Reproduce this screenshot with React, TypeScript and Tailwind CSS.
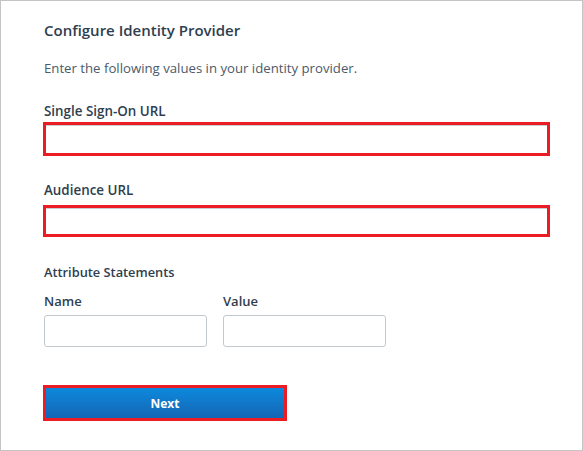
import React from "react";

export default function App() {
  return (
    <div
      className="w-[583px] h-[451px] bg-white border border-[#c4c4c4] pl-[43px] pt-[19px] flex flex-col text-[#2f3e4f]"
      style={{ fontFamily: "'Open Sans', 'Liberation Sans', sans-serif" }}
    >
      <div className="text-[15px] leading-[20px] font-semibold h-[20px]">Configure Identity Provider</div>
      <div className="mt-[19px] text-[13.2px] leading-[18px] text-[#4c5a69]">
        Enter the following values in your identity provider.
      </div>
      <div className="mt-[25px] text-[13.4px] leading-[18px] font-semibold">Single Sign-On URL</div>
      <div className="mt-[2px] w-[507px] h-[34px] border-[3px] border-[#ec1c24] -ml-[1px]">
        <input className="w-full h-full border-t border-[#c8cdd2] outline-none bg-white" />
      </div>
      <div className="mt-[25px] text-[13.4px] leading-[18px] font-semibold">Audience URL</div>
      <div className="mt-[6px] w-[507px] h-[32px] border-[3px] border-[#ec1c24] -ml-[1px]">
        <input className="w-full h-full border-t border-[#c8cdd2] outline-none bg-white" />
      </div>
      <div className="mt-[26px] text-[12.8px] leading-[18px] font-semibold">Attribute Statements</div>
      <div className="mt-[11px] flex gap-[16px]">
        <div className="flex flex-col w-[163px]">
          <div className="text-[13px] leading-[18px] font-semibold">Name</div>
          <input className="mt-[5px] h-[32px] w-[163px] rounded-[3px] border border-[#c3c8cd] outline-none" />
        </div>
        <div className="flex flex-col w-[163px]">
          <div className="text-[13px] leading-[18px] font-semibold">Value</div>
          <input className="mt-[5px] h-[32px] w-[163px] rounded-[3px] border border-[#c3c8cd] outline-none" />
        </div>
      </div>
      <div className="mt-[38px] w-[244px] h-[36px] border-[3px] border-[#ec1c24] -ml-[1px]">
        <button className="w-full h-full bg-gradient-to-b from-[#0b89dd] to-[#1466b4] text-white text-[12px] font-bold flex items-center justify-center pt-[2px]">
          Next
        </button>
      </div>
    </div>
  );
}
